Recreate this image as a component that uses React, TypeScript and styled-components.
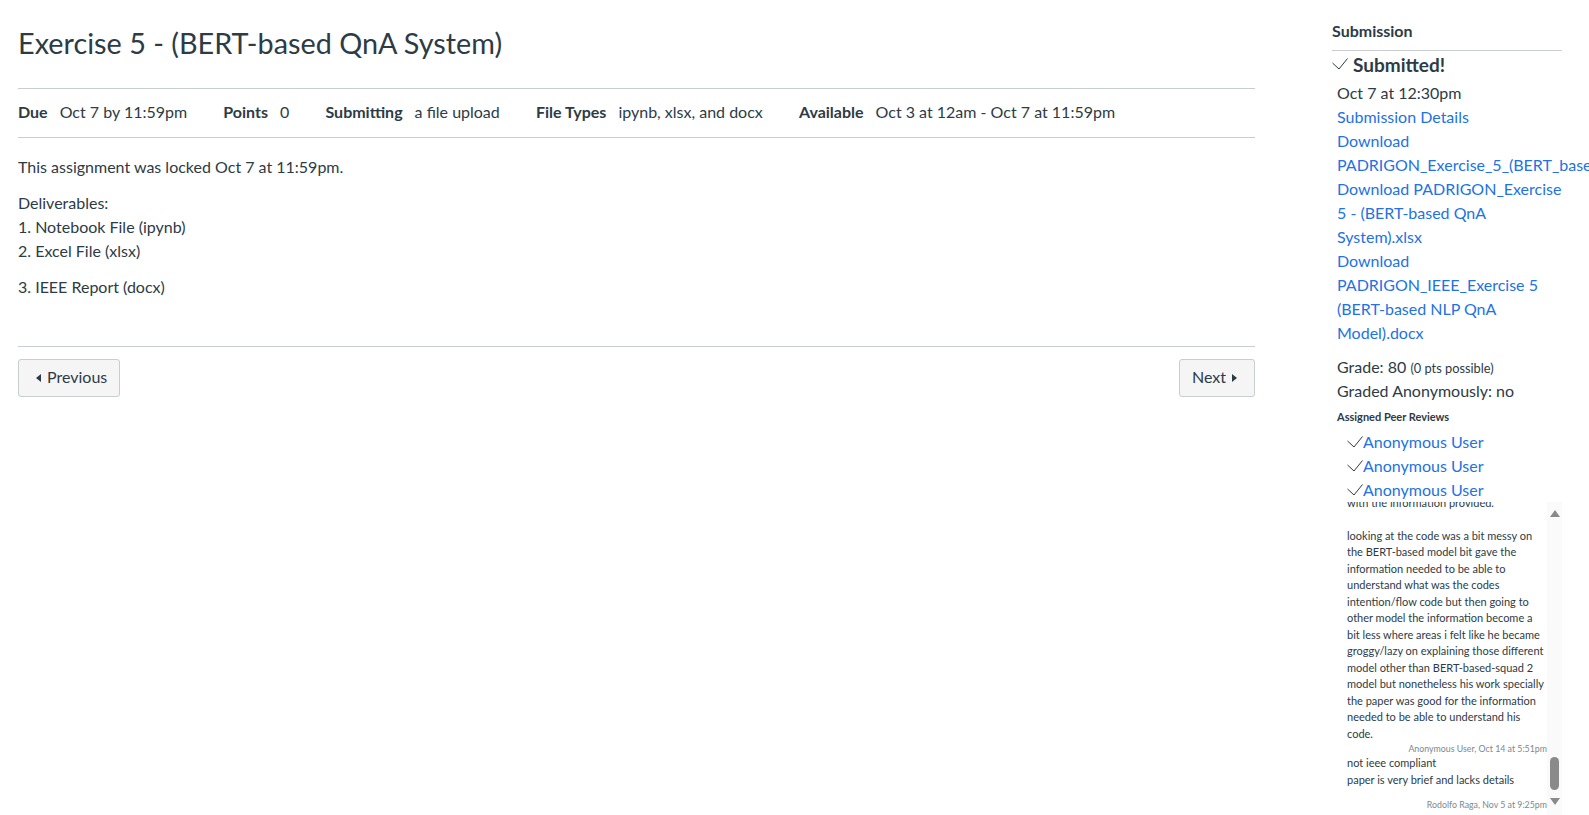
import styled, { createGlobalStyle } from "styled-components";

const GlobalStyle = createGlobalStyle`
  html, body {
    margin: 0;
    padding: 0;
    height: 100%;
    overflow: hidden;
    background: #fff;
  }
  body {
    font-family: Lato, "Liberation Sans", sans-serif;
    color: #2d3b45;
  }
`;

const Page = styled.div`
  display: flex;
  height: 815px;
  overflow: hidden;
`;

const Main = styled.main`
  width: 1237px;
  margin-left: 18px;
  flex-shrink: 0;
`;

const Title = styled.h1`
  margin: 0;
  padding-top: 25px;
  height: 63px;
  font-size: 28.8px;
  line-height: 36px;
  font-weight: 400;
`;

const Details = styled.ul`
  list-style: none;
  margin: 0;
  padding: 0 0 3px;
  height: 45px;
  display: flex;
  align-items: center;
  gap: 36.2px;
  border-top: 1px solid #c7cdd1;
  border-bottom: 1px solid #c7cdd1;
  font-size: 16px;
`;

const DetailItem = styled.li`
  display: flex;
  gap: 12px;
`;

const Label = styled.span`
  font-weight: 700;
`;

const Description = styled.div`
  padding-top: 17px;
  height: 191px;
  font-size: 16px;
  line-height: 24px;
  border-bottom: 1px solid #c7cdd1;
`;

const Paragraph = styled.p`
  margin: 0 0 12px;
`;

const Pager = styled.nav`
  display: flex;
  justify-content: space-between;
  padding-top: 12px;
`;

const PagerButton = styled.a<{ $dir: "left" | "right" }>`
  display: flex;
  align-items: center;
  gap: 6px;
  height: 33px;
  padding: 0 ${(p) => (p.$dir === "right" ? 17 : 12)}px 3px ${(p) => (p.$dir === "left" ? 17 : 12)}px;
  background: #f5f5f5;
  border: 1px solid #c7cdd1;
  border-radius: 3px;
  font-size: 16px;
  color: #2d3b45;
`;

const Caret = styled.span<{ $dir: "left" | "right" }>`
  width: 0;
  height: 0;
  margin-top: 2px;
  border-top: 4px solid transparent;
  border-bottom: 4px solid transparent;
  ${(p) =>
    p.$dir === "left"
      ? "border-right: 5px solid #2d3b45;"
      : "border-left: 5px solid #2d3b45;"}
`;

const Sidebar = styled.aside`
  width: 230px;
  margin-left: 77px;
  flex-shrink: 0;
  display: flex;
  flex-direction: column;
  height: 815px;
`;

const SideHeading = styled.h2`
  margin: 0;
  padding-top: 21px;
  height: 29px;
  font-size: 16px;
  line-height: 20px;
  font-weight: 700;
  border-bottom: 1px solid #c7cdd1;
`;

const Submitted = styled.div`
  display: flex;
  align-items: center;
  gap: 5px;
  height: 26px;
  padding-bottom: 4px;
  font-size: 19px;
  font-weight: 700;
`;

const Info = styled.div`
  padding-left: 5px;
  font-size: 16px;
  line-height: 24px;
`;

const Link = styled.a`
  display: block;
  color: #2272e3;
  text-decoration: none;
`;

const Grades = styled.div`
  padding: 10px 0 0 5px;
  font-size: 16px;
  line-height: 24px;
`;

const Small = styled.small`
  font-size: 12.8px;
  line-height: 1;
`;

const ReviewsHeading = styled.h3`
  margin: 0;
  padding: 5px 0 0 5px;
  height: 20px;
  font-size: 11px;
  line-height: 18px;
  font-weight: 700;
`;

const Reviews = styled.ul`
  list-style: none;
  margin: 0;
  padding: 2px 0 0 15px;
  font-size: 16px;
  line-height: 24px;
`;

const Review = styled.li`
  display: flex;
  align-items: center;
`;

const CommentBox = styled.div`
  flex: 1;
  min-height: 0;
  display: flex;
  overflow: hidden;
`;

const CommentScroll = styled.div`
  width: 200px;
  margin-left: 15px;
  padding-bottom: 4px;
  overflow: hidden;
  display: flex;
  flex-direction: column;
  justify-content: flex-end;
  font-size: 11px;
  line-height: 16.5px;
`;

const CommentText = styled.p<{ $gap?: number }>`
  margin: 0 0 ${(p) => p.$gap ?? 0}px;
  white-space: pre-line;
  flex-shrink: 0;
`;

const CommentMeta = styled.div`
  flex-shrink: 0;
  text-align: right;
  font-size: 8.8px;
  line-height: 12px;
  color: #7d878e;
`;

const Scrollbar = styled.div`
  width: 15px;
  flex-shrink: 0;
  background: #fafafa;
  display: flex;
  flex-direction: column;
  align-items: center;
  padding: 8px 0 10px;
  box-sizing: border-box;
`;

const ScrollArrow = styled.span<{ $dir: "up" | "down" }>`
  width: 0;
  height: 0;
  border-left: 5px solid transparent;
  border-right: 5px solid transparent;
  ${(p) =>
    p.$dir === "up"
      ? "border-bottom: 7px solid #8a8a8a;"
      : "border-top: 7px solid #8a8a8a;"}
`;

const Track = styled.div`
  flex: 1;
  display: flex;
  flex-direction: column;
  justify-content: flex-end;
  padding-bottom: 8px;
`;

const Thumb = styled.div`
  width: 9px;
  height: 33px;
  border-radius: 5px;
  background: #8a8a8a;
`;

const CheckIcon = () => (
  <svg width={16} height={12} viewBox="0 0 16 12" fill="none">
    <path d="M0.5 5 L7 11 L15.5 0.5" stroke="#2d3b45" strokeWidth="1" />
  </svg>
);

const comment = `with the information provided.

looking at the code was a bit messy on the BERT-based model bit gave the information needed to be able to understand what was the codes intention/flow code but then going to other model the information become a bit less where areas i felt like he became groggy/lazy on explaining those different model other than BERT-based-squad 2 model but nonetheless his work specially the paper was good for the information needed to be able to understand his code.`;

export default function App() {
  return (
    <>
      <GlobalStyle />
      <Page>
        <Main>
          <Title>Exercise 5 - (BERT-based QnA System)</Title>
          <Details>
            <DetailItem>
              <Label>Due</Label>
              <span>Oct 7 by 11:59pm</span>
            </DetailItem>
            <DetailItem>
              <Label>Points</Label>
              <span>0</span>
            </DetailItem>
            <DetailItem>
              <Label>Submitting</Label>
              <span>a file upload</span>
            </DetailItem>
            <DetailItem>
              <Label>File Types</Label>
              <span>ipynb, xlsx, and docx</span>
            </DetailItem>
            <DetailItem>
              <Label>Available</Label>
              <span>Oct 3 at 12am - Oct 7 at 11:59pm</span>
            </DetailItem>
          </Details>
          <Description>
            <Paragraph>This assignment was locked Oct 7 at 11:59pm.</Paragraph>
            <Paragraph>
              Deliverables:
              <br />
              1. Notebook File (ipynb)
              <br />
              2. Excel File (xlsx)
            </Paragraph>
            <Paragraph>3. IEEE Report (docx)</Paragraph>
          </Description>
          <Pager>
            <PagerButton $dir="left">
              <Caret $dir="left" />
              Previous
            </PagerButton>
            <PagerButton $dir="right">
              Next
              <Caret $dir="right" />
            </PagerButton>
          </Pager>
        </Main>
        <Sidebar>
          <SideHeading>Submission</SideHeading>
          <Submitted>
            <CheckIcon />
            Submitted!
          </Submitted>
          <Info>
            <div>Oct 7 at 12:30pm</div>
            <Link>Submission Details</Link>
            <Link>Download PADRIGON_Exercise_5_(BERT_based_QnA_System).ipynb</Link>
            <Link>Download PADRIGON_Exercise 5 - (BERT-based QnA System).xlsx</Link>
            <Link>Download PADRIGON_IEEE_Exercise 5 (BERT-based NLP QnA Model).docx</Link>
          </Info>
          <Grades>
            <div>
              Grade: 80 <Small>(0 pts possible)</Small>
            </div>
            <div>Graded Anonymously: no</div>
          </Grades>
          <ReviewsHeading>Assigned Peer Reviews</ReviewsHeading>
          <Reviews>
            {[0, 1, 2].map((i) => (
              <Review key={i}>
                <CheckIcon />
                <Link>Anonymous User</Link>
              </Review>
            ))}
          </Reviews>
          <CommentBox>
            <CommentScroll>
              <CommentText $gap={1}>{comment}</CommentText>
              <CommentMeta>Anonymous User, Oct 14 at 5:51pm</CommentMeta>
              <CommentText $gap={11}>{"not ieee compliant\npaper is very brief and lacks details"}</CommentText>
              <CommentMeta>Rodolfo Raga, Nov 5 at 9:25pm</CommentMeta>
            </CommentScroll>
            <Scrollbar>
              <ScrollArrow $dir="up" />
              <Track>
                <Thumb />
              </Track>
              <ScrollArrow $dir="down" />
            </Scrollbar>
          </CommentBox>
        </Sidebar>
      </Page>
    </>
  );
}
